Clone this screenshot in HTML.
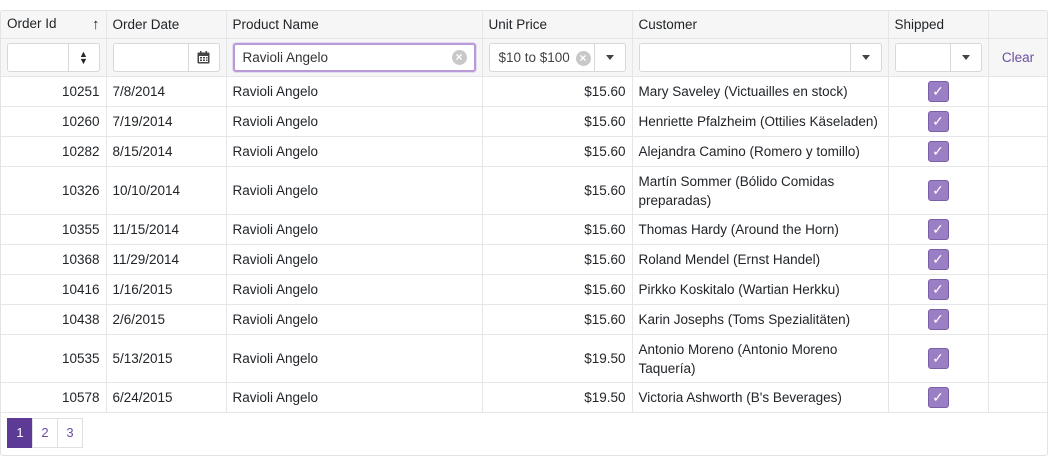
<!DOCTYPE html><html><head><style>
body{margin:0;background:#fff;font-family:"Liberation Sans",sans-serif;font-size:13.5px;color:#212529}
.wrap{position:absolute;left:0;top:10px;width:1046px;height:444px;border:1px solid #e3e3e6;border-radius:3px;overflow:hidden}
table{border-collapse:collapse;table-layout:fixed;width:1047px}
td,th{border-right:1px solid #e6e6ea;border-bottom:1px solid #e6e6ea;padding:0 6px;white-space:nowrap;overflow:hidden}
th{background:#f6f6f6;font-weight:normal;text-align:left;height:27px}
tr.f td{background:#f6f6f6;height:37px;padding:0 6px}
tr.d td{height:29px}
tr.t td{height:47px;white-space:normal;line-height:19px}
.r{text-align:right}
.box{border:1px solid #d8d8dc;border-radius:3px;height:29px;background:#fff;position:relative;box-sizing:border-box}
.btn{position:absolute;right:0;top:0;bottom:0;width:30px;border-left:1px solid #d8d8dc;display:flex;align-items:center;justify-content:center}
.tri{width:0;height:0;border-left:4px solid transparent;border-right:4px solid transparent;border-top:5px solid #444}
.x{position:absolute;top:7px;width:15px;height:15px;border-radius:50%;background:#c8c8c8;color:#fff;font-size:12px;line-height:15px;text-align:center;font-weight:bold}
.cb{width:19px;height:19px;background:#9b7fc4;border:1px solid #7a5ea8;border-radius:3px;margin:0 auto;color:#fff;font-size:14px;line-height:19px;text-align:center}
.pg{position:absolute;left:7px;top:407px;display:flex}
.pg div{width:24px;height:28px;border:1px solid #e0e0e4;margin-left:-1px;text-align:center;line-height:28px;color:#6c4fa3;font-size:13px}
.pg .a{background:#5c3a95;color:#fff;border-color:#5c3a95}
</style></head><body>
<div class="wrap">
<table>
<colgroup><col style="width:105px"><col style="width:120px"><col style="width:256px"><col style="width:150px"><col style="width:256px"><col style="width:100px"><col style="width:60px"></colgroup>
<tr><th>Order Id<span style="float:right;font-weight:bold;font-size:15px">&#8593;</span></th><th>Order Date</th><th>Product Name</th><th>Unit Price</th><th>Customer</th><th>Shipped</th><th></th></tr>
<tr class="f">
<td><div class="box"><div class="btn" style="font-size:9px;line-height:7px;flex-direction:column">&#9650;<br>&#9660;</div></div></td>
<td><div class="box"><div class="btn"><svg width="13" height="13" viewBox="0 0 13 13"><rect x="0.5" y="1.5" width="12" height="11" rx="1" fill="#444"/><rect x="2" y="5" width="9" height="6" fill="#fff"/><g fill="#444"><rect x="3" y="6" width="2" height="1.5"/><rect x="6" y="6" width="2" height="1.5"/><rect x="9" y="6" width="1.5" height="1.5"/><rect x="3" y="8.5" width="2" height="1.5"/><rect x="6" y="8.5" width="2" height="1.5"/><rect x="9" y="8.5" width="1.5" height="1.5"/></g><rect x="3" y="0" width="1.5" height="3" fill="#444"/><rect x="8.5" y="0" width="1.5" height="3" fill="#444"/></svg></div></div></td>
<td><div class="box" style="border:2px solid #b89ad8;box-shadow:0 0 0 1px #e5dbf1;line-height:25px;padding-left:8px;color:#333">Ravioli Angelo<div class="x" style="right:7px;top:5px">×</div></div></td>
<td><div class="box" style="line-height:27px;padding-left:9px;color:#444">$10 to $100<div class="x" style="right:34px">×</div><div class="btn"><div class="tri"></div></div></div></td>
<td><div class="box"><div class="btn"><div class="tri"></div></div></div></td>
<td><div class="box"><div class="btn"><div class="tri"></div></div></div></td>
<td class="r" style="color:#6c4fa3;text-align:center">Clear</td>
</tr>
<tr class="d"><td class="r">10251</td><td>7/8/2014</td><td>Ravioli Angelo</td><td class="r">$15.60</td><td>Mary Saveley (Victuailles en stock)</td><td><div class="cb">✓</div></td><td></td></tr>
<tr class="d"><td class="r">10260</td><td>7/19/2014</td><td>Ravioli Angelo</td><td class="r">$15.60</td><td>Henriette Pfalzheim (Ottilies Käseladen)</td><td><div class="cb">✓</div></td><td></td></tr>
<tr class="d"><td class="r">10282</td><td>8/15/2014</td><td>Ravioli Angelo</td><td class="r">$15.60</td><td>Alejandra Camino (Romero y tomillo)</td><td><div class="cb">✓</div></td><td></td></tr>
<tr class="d t"><td class="r">10326</td><td>10/10/2014</td><td>Ravioli Angelo</td><td class="r">$15.60</td><td>Martín Sommer (Bólido Comidas preparadas)</td><td><div class="cb">✓</div></td><td></td></tr>
<tr class="d"><td class="r">10355</td><td>11/15/2014</td><td>Ravioli Angelo</td><td class="r">$15.60</td><td>Thomas Hardy (Around the Horn)</td><td><div class="cb">✓</div></td><td></td></tr>
<tr class="d"><td class="r">10368</td><td>11/29/2014</td><td>Ravioli Angelo</td><td class="r">$15.60</td><td>Roland Mendel (Ernst Handel)</td><td><div class="cb">✓</div></td><td></td></tr>
<tr class="d"><td class="r">10416</td><td>1/16/2015</td><td>Ravioli Angelo</td><td class="r">$15.60</td><td>Pirkko Koskitalo (Wartian Herkku)</td><td><div class="cb">✓</div></td><td></td></tr>
<tr class="d"><td class="r">10438</td><td>2/6/2015</td><td>Ravioli Angelo</td><td class="r">$15.60</td><td>Karin Josephs (Toms Spezialitäten)</td><td><div class="cb">✓</div></td><td></td></tr>
<tr class="d t"><td class="r">10535</td><td>5/13/2015</td><td>Ravioli Angelo</td><td class="r">$19.50</td><td>Antonio Moreno (Antonio Moreno Taquería)</td><td><div class="cb">✓</div></td><td></td></tr>
<tr class="d"><td class="r">10578</td><td>6/24/2015</td><td>Ravioli Angelo</td><td class="r">$19.50</td><td>Victoria Ashworth (B's Beverages)</td><td><div class="cb">✓</div></td><td></td></tr>
</table>
<div class="pg"><div class="a">1</div><div>2</div><div>3</div></div>
</div>
</body></html>
